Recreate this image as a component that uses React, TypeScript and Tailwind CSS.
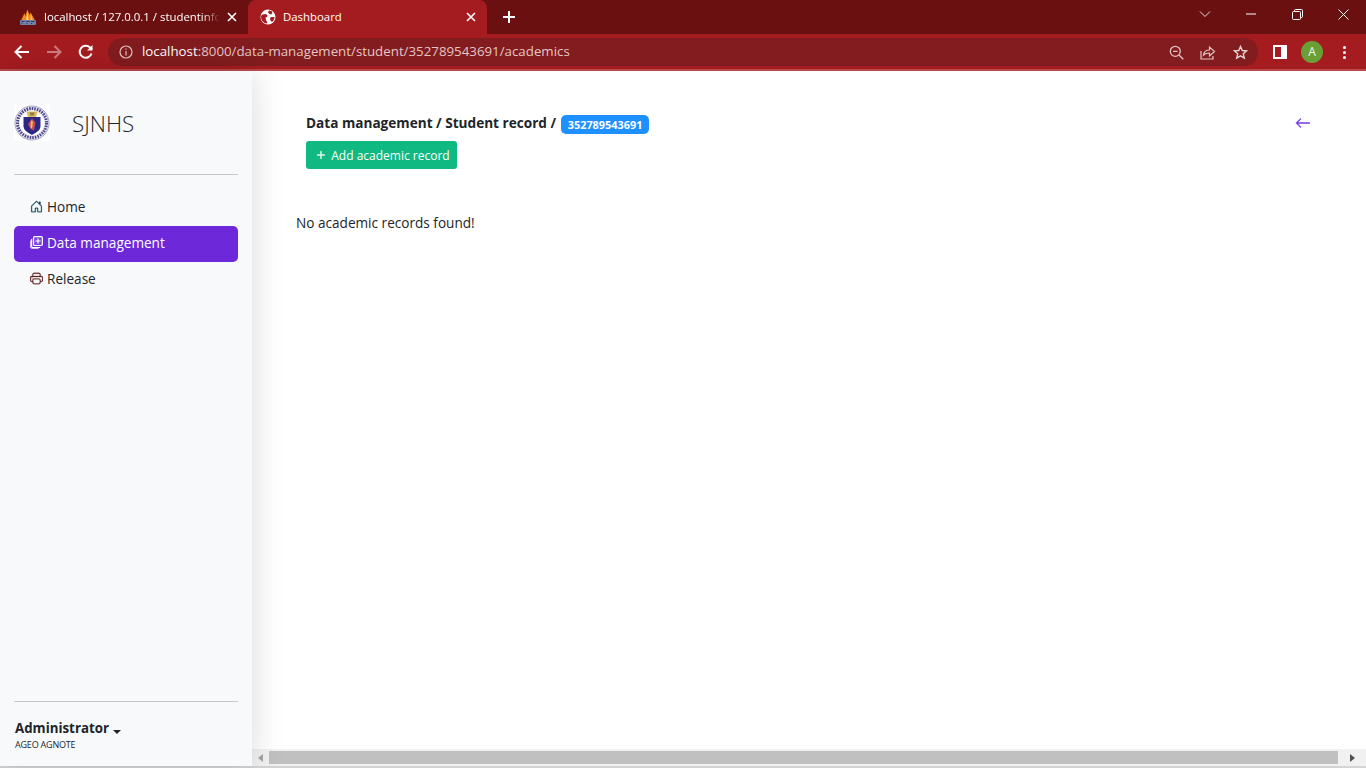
import { BsHouseDoor, BsPrinter, BsArrowLeft, BsPlus } from 'react-icons/bs';

const ui = { fontFamily: '"Open Sans", "Noto Sans", sans-serif' };

function TabClose() {
  return (
    <svg width="10" height="10" viewBox="0 0 10 10" fill="none" stroke="white" strokeWidth="1.6">
      <path d="M1 1l8 8M9 1l-8 8" />
    </svg>
  );
}

function PmaLogo() {
  return (
    <svg width="16" height="16" viewBox="0 0 16 16">
      <path d="M1 11.500L4.500 4l.8 3L7.500 0.500 9.500 6l1-2.500 1 1.500L15 11.500z" fill="#ef8a22" />
      <path d="M7.500 2.500L8.500 11H6.300z" fill="#ffd98a" />
      <path d="M11 5l1.500 6h-2z" fill="#ffc060" />
      <rect x="0" y="11" width="16" height="5" rx="1" fill="#7182a8" />
      <path d="M1.500 12.500h3M6.500 12.500h3M11 12.500h3.500M1.500 14.500h1M6.500 14.500h1M11 14.500h1" stroke="#2e3a58" strokeWidth="1" />
    </svg>
  );
}

function Globe() {
  return (
    <svg width="16" height="16" viewBox="0 0 16 16">
      <circle cx="8" cy="8" r="7.500" fill="white" />
      <path d="M2.500 5.500L6 5l1.500 1.500L7 8 5.500 8.500 6 11l1.500 3L6 14.500C3 13.500 1 11 1 8c0-1 .6-2 1.500-2.500zM9 1.500l2.500.5 1 2L11 5.500 9.500 5 8 3.500zM11 8h3.500c0 2-1 4-2.500 5l-1.500-1.500L10 9.500z" fill="#a51c20" />
    </svg>
  );
}

function Emblem() {
  return (
    <div className="w-9 h-9 bg-white flex items-center justify-center shrink-0">
      <svg width="36" height="36" viewBox="0 0 36 36">
        <circle cx="18" cy="18" r="17" fill="#eeedf6" stroke="#8f8cb8" strokeWidth="0.800" />
        <circle cx="18" cy="18" r="14.500" fill="none" stroke="#4b4688" strokeWidth="3" strokeDasharray="1.600 1" />
        <circle cx="18" cy="18" r="12" fill="white" />
        <path d="M9.500 12h17v9c0 4.500-4.500 6.500-8.500 9-4-2.500-8.500-4.500-8.500-9z" fill="#2c2782" />
        <path d="M12.500 6.500h11l-1.500 5.500h-8z" fill="#d9b85a" />
        <path d="M15.500 7.500h5l-1 3h-3z" fill="#8a7a48" />
        <path d="M18 13.500l3.500 4-1.500 8-3.500-1.500-2.500-5z" fill="#c94a5a" />
        <path d="M17 15.500l2 1-1 7-1.500-1z" fill="#e7c763" />
      </svg>
    </div>
  );
}

function DataIcon() {
  return (
    <svg width="13" height="13" viewBox="0 0 13 13" fill="none" stroke="currentColor" strokeWidth="1.200">
      <rect x="3.500" y="0.600" width="8.900" height="8.900" rx="1.200" fill="currentColor" fillOpacity="0.15" />
      <path d="M8 2.500v5M5.500 5h5" />
      <path d="M1.600 3v7.200c0 .8.600 1.300 1.300 1.300h7.200" />
      <path d="M0.600 4.500v6.500c0 .8.600 1.400 1.400 1.400h6.500" strokeWidth="0.800" />
    </svg>
  );
}

function NavItem({ icon, label, active, iconClass }: { icon: React.ReactNode; label: string; active?: boolean; iconClass?: string }) {
  return (
    <div
      className={`h-9 pl-4 rounded-[5px] flex items-center gap-1 text-[13.600px] ${active ? 'bg-[#6d28d9] text-white' : 'text-[#212529]'}`}
    >
      <span className={`w-[13px] flex justify-center -mt-[3px] ${iconClass ?? ''}`}>{icon}</span>
      <span className="-mt-px">{label}</span>
    </div>
  );
}

export default function App() {
  return (
    <div className="h-screen w-[1366px] overflow-hidden flex flex-col bg-white" style={ui}>
      {/* tab strip */}
      <div className="h-[34px] bg-[#6b1010] flex items-stretch shrink-0 text-white text-[11.400px]">
        <div className="w-[248px] pl-[20px] flex items-center">
          <PmaLogo />
          <span className="ml-2 w-[176px] overflow-hidden whitespace-nowrap [mask-image:linear-gradient(to_right,black_90%,transparent)]">
            localhost / 127.0.0.1 / studentinfo
          </span>
          <span className="ml-[7px]"><TabClose /></span>
        </div>
        <div className="w-[239px] bg-[#a51c20] rounded-t-lg pl-[12px] pr-[11px] flex items-center">
          <Globe />
          <span className="ml-[7px] flex-1">Dashboard</span>
          <TabClose />
        </div>
        <div className="ml-[15px] flex items-center">
          <svg width="14" height="14" viewBox="0 0 14 14" stroke="white" strokeWidth="2">
            <path d="M7 1v12M1 7h12" />
          </svg>
        </div>
        <div className="ml-auto flex items-center pr-0 -mt-[6px]">
          <div className="w-[46px] flex justify-center">
            <svg width="12" height="7" viewBox="0 0 12 7" fill="none" stroke="#e8dcdc" strokeWidth="1"><path d="M1 .5l5 5 5-5" /></svg>
          </div>
          <div className="w-[46px] flex justify-center">
            <svg width="10" height="2" viewBox="0 0 10 2" stroke="white" strokeWidth="1"><path d="M0 1h10" /></svg>
          </div>
          <div className="w-[46px] flex justify-center">
            <svg width="11" height="11" viewBox="0 0 11 11" fill="none" stroke="white" strokeWidth="1"><rect x=".5" y="2.500" width="8" height="8" rx="1" /><path d="M2.500 2.500V1.500a1 1 0 0 1 1-1h6a1 1 0 0 1 1 1v6a1 1 0 0 1-1 1h-1" /></svg>
          </div>
          <div className="w-[46px] flex justify-center">
            <svg width="11" height="11" viewBox="0 0 11 11" stroke="white" strokeWidth="1"><path d="M.5.500l10 10M10.500.500l-10 10" /></svg>
          </div>
        </div>
      </div>

      {/* toolbar */}
      <div className="h-[37px] bg-[#a51c20] border-b-[2px] border-[#b94a4c] flex items-center shrink-0 pt-[1px]">
        <div className="w-[108px] flex items-center">
          <div className="w-[44px] flex justify-center">
            <svg width="16" height="14" viewBox="0 0 16 14" fill="none" stroke="white" strokeWidth="2"><path d="M15 7H2M7.500 1L1.500 7l6 6" /></svg>
          </div>
          <div className="w-[20px] flex justify-center">
            <svg width="16" height="14" viewBox="0 0 16 14" fill="none" stroke="#d07c7e" strokeWidth="2"><path d="M1 7h13M8.500 1l6 6-6 6" /></svg>
          </div>
          <div className="w-[44px] flex justify-center">
            <svg width="16" height="16" viewBox="0 0 16 16" fill="none" stroke="white" strokeWidth="2"><path d="M13.500 9.500A6 6 0 1 1 12 3.500L14 5.500" /><path d="M14.500 1v5.500H9" fill="white" stroke="none" /></svg>
          </div>
        </div>
        <div className="w-[1150px] h-[28px] rounded-full bg-[#831c1e] flex items-center pl-[11px] text-[13.300px] text-[#e3c5c6]">
          <svg width="14" height="14" viewBox="0 0 14 14" fill="none" stroke="#e3c5c6" strokeWidth="1.200"><circle cx="7" cy="7" r="6" /><path d="M7 6v4.500M7 3.500v1.300" /></svg>
          <span className="ml-[9px] whitespace-nowrap">
            <span className="text-white">localhost</span>:8000/data-management/student/352789543691/academics
          </span>
          <div className="ml-auto flex items-center pr-[2px]">
            <div className="w-[32px] flex justify-center">
              <svg width="15" height="15" viewBox="0 0 15 15" fill="none" stroke="#e3c5c6" strokeWidth="1.300"><circle cx="6.300" cy="6.300" r="5" /><path d="M10 10l4.300 4.300M4 6.300h4.600" /></svg>
            </div>
            <div className="w-[32px] flex justify-center">
              <svg width="16" height="16" viewBox="0 0 16 16" fill="none" stroke="#e3c5c6" strokeWidth="1.200"><path d="M1 7v8h12v-3" /><path d="M3.500 11c.5-3.500 3-5 6-5V3l5 4.500-5 4.500V9c-2.500 0-4.500.5-6 2z" /></svg>
            </div>
            <div className="w-[32px] flex justify-center">
              <svg width="15" height="15" viewBox="0 0 15 15" fill="none" stroke="#e8d4d4" strokeWidth="1.400"><path d="M7.500 1.500l1.800 4 4.300.4-3.300 2.900 1 4.300-3.800-2.300-3.800 2.300 1-4.300L1.400 5.900l4.300-.4z" /></svg>
            </div>
          </div>
        </div>
        <div className="ml-[15px] w-[14px] h-[14px] border-[2px] border-white flex justify-end">
          <div className="w-[4px] bg-white" />
        </div>
        <div className="ml-[14px] w-[22px] h-[22px] rounded-full bg-[#6a9f36] text-[#f1f6ea] text-[12px] flex items-center justify-center">
          A
        </div>
        <div className="ml-[20px] flex flex-col gap-[2px]">
          <div className="w-[3px] h-[3px] bg-white rounded-full" />
          <div className="w-[3px] h-[3px] bg-white rounded-full" />
          <div className="w-[3px] h-[3px] bg-white rounded-full" />
        </div>
      </div>

      {/* page */}
      <div className="flex-1 flex min-h-0">
        <aside className="w-[252px] shrink-0 bg-[#f8f9fb] px-[14px] pt-[34px] pb-[15px] flex flex-col relative z-10 shadow-[0_0_32px_rgba(0,0,0,0.15)]">
          <div className="flex items-center">
            <Emblem />
            <span className="ml-[22px] mt-[2px] text-[22.400px] text-[#212529] font-light">SJNHS</span>
          </div>
          <div className="mt-[33px] mb-[15px] border-t border-[#c6c7cc]" />
          <NavItem icon={<BsHouseDoor size={13} strokeWidth={0.3} />} label="Home" iconClass="text-[#12495c]" />
          <NavItem icon={<DataIcon />} label="Data management" active />
          <NavItem icon={<BsPrinter size={13} strokeWidth={0.3} />} label="Release" iconClass="text-[#5b1f1f]" />
          <div className="mt-auto border-t border-[#c6c7cc]" />
          <div className="mt-[17px] pl-px flex items-center text-[13.300px] font-bold text-[#212529] leading-[18px]">
            Administrator
            <span className="ml-[4px] mt-[7px] w-0 h-0 border-x-[4px] border-x-transparent border-t-[4px] border-t-[#212529]" />
          </div>
          <div className="mt-[2px] pl-px text-[9px] text-[#212529] leading-[12px] tracking-[-0.2px]">AGEO AGNOTE</div>
        </aside>

        <main className="flex-1 min-w-0 flex flex-col">
          <div className="flex-1 pl-[44px] pr-[55px] pt-[42px] text-[#212529]">
            <div className="pl-[10px] flex items-start justify-between h-[20px]">
              <div className="flex items-start text-[13.600px] leading-[20px] font-bold whitespace-nowrap">
                Data management / Student record /
                <span className="ml-[5px] mt-[2px] h-[19px] w-[88px] rounded-[5px] bg-[#1e90ff] text-white text-[10.900px] leading-[19px] font-bold text-center">
                  352789543691
                </span>
              </div>
              <BsArrowLeft size={16} className="text-[#6d28d9] mt-[2px]" strokeWidth={0.4} />
            </div>
            <div className="pl-[10px] mt-[8px]">
              <button className="h-[28px] w-[151px] pt-px rounded-[3px] bg-[#10b981] text-white text-[12px] flex items-center justify-center whitespace-nowrap">
                <BsPlus size={16} strokeWidth={0.3} className="-mt-[2px]" />
                <span className="ml-[2px]">Add academic record</span>
              </button>
            </div>
            <p className="mt-[44px] text-[13.600px] leading-[20px]">No academic records found!</p>
          </div>
          {/* horizontal scrollbar */}
          <div className="h-[17px] bg-[#f1f1f1] flex items-center shrink-0">
            <div className="w-[17px] flex justify-center">
              <div className="w-0 h-0 border-y-[4px] border-y-transparent border-r-[5px] border-r-[#a3a3a3]" />
            </div>
            <div className="flex-1 h-[13px] bg-[#c0c0c0]" />
            <div className="w-[28px] flex justify-center">
              <div className="w-0 h-0 border-y-[4px] border-y-transparent border-l-[5px] border-l-[#505050]" />
            </div>
          </div>
        </main>
      </div>
      <div className="h-[2px] bg-[#d4d4d4] shrink-0" />
    </div>
  );
}
